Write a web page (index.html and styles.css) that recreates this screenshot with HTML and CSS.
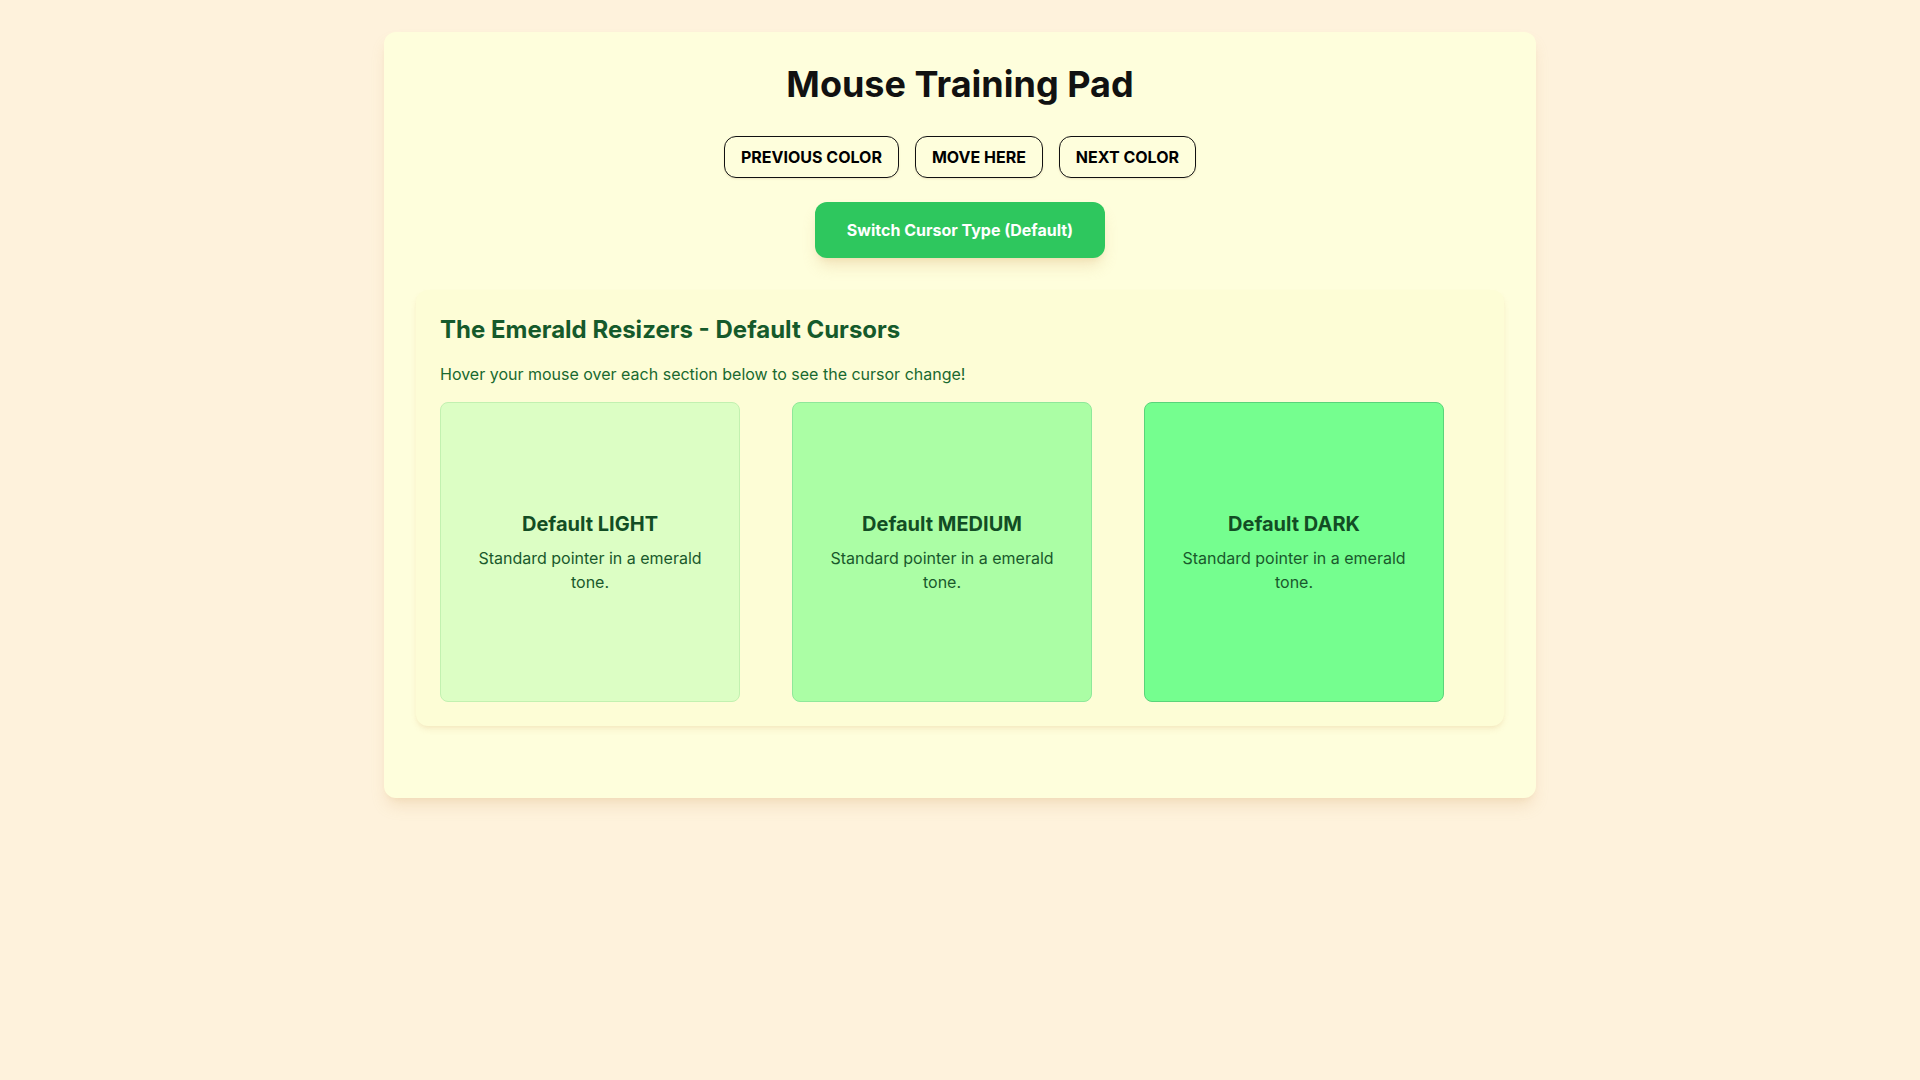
FILE: index.html
```html
<!DOCTYPE html>
<html lang="en">
<head>
<meta charset="utf-8">
<title>Mouse Training Pad</title>
<link rel="stylesheet" href="styles.css">
</head>
<body>
<main class="card">
  <h1 class="title">Mouse Training Pad</h1>
  <div class="nav">
    <button class="nav-btn">PREVIOUS COLOR</button>
    <button class="nav-btn">MOVE HERE</button>
    <button class="nav-btn">NEXT COLOR</button>
  </div>
  <div class="switch-row">
    <button class="switch-btn">Switch Cursor Type (Default)</button>
  </div>
  <section class="panel">
    <h2 class="panel-title">The Emerald Resizers - Default Cursors</h2>
    <p class="panel-text">Hover your mouse over each section below to see the cursor change!</p>
    <div class="boxes">
      <div class="box box-light">
        <h3 class="box-title">Default LIGHT</h3>
        <p class="box-text">Standard pointer in a emerald tone.</p>
      </div>
      <div class="box box-medium">
        <h3 class="box-title">Default MEDIUM</h3>
        <p class="box-text">Standard pointer in a emerald tone.</p>
      </div>
      <div class="box box-dark">
        <h3 class="box-title">Default DARK</h3>
        <p class="box-text">Standard pointer in a emerald tone.</p>
      </div>
    </div>
  </section>
</main>
</body>
</html>
```

FILE: styles.css
```css
* { box-sizing: border-box; }

html, body {
  margin: 0;
  padding: 0;
}

body {
  background: #fef2dc;
  font-family: Inter, "Noto Sans", "Liberation Sans", sans-serif;
  color: #111;
  min-height: 1080px;
  padding-top: 32px;
}

.card {
  width: 1152px;
  margin: 0 auto;
  background: #fefedc;
  border-radius: 12px;
  padding: 32px;
  box-shadow: 0 10px 15px -3px rgba(214, 170, 110, 0.25), 0 4px 6px -4px rgba(214, 170, 110, 0.2);
}

.title {
  margin: 0 0 32px;
  text-align: center;
  font-size: 36px;
  line-height: 40px;
  font-weight: 700;
  color: #111;
}

.nav {
  display: flex;
  justify-content: center;
  gap: 16px;
  margin-bottom: 24px;
}

.nav-btn {
  font-family: inherit;
  font-size: 16px;
  line-height: 24px;
  font-weight: 700;
  color: #000;
  background: transparent;
  border: 1px solid #111;
  border-radius: 12px;
  padding: 8px 16px;
  box-shadow: 0 1px 2px rgba(180, 140, 90, 0.2);
}

.switch-row {
  display: flex;
  justify-content: center;
  margin-bottom: 32px;
}

.switch-btn {
  font-family: inherit;
  font-size: 16px;
  line-height: 24px;
  font-weight: 700;
  color: #fff;
  background: #2ec75e;
  border: none;
  border-radius: 12px;
  padding: 16px 32px;
  box-shadow: 0 10px 15px -3px rgba(214, 170, 110, 0.3), 0 4px 6px -4px rgba(214, 170, 110, 0.25);
}

.panel {
  background: #fdfdd6;
  border-radius: 12px;
  padding: 24px;
  margin-bottom: 40px;
  box-shadow: 0 4px 6px -1px rgba(214, 170, 110, 0.2), 0 2px 4px -2px rgba(214, 170, 110, 0.15);
}

.panel-title {
  margin: 0 0 16px;
  font-size: 24px;
  line-height: 32px;
  font-weight: 700;
  color: #155a2b;
}

.panel-text {
  margin: 0 0 16px;
  font-size: 16px;
  line-height: 24px;
  color: #19692f;
}

.boxes {
  display: flex;
  flex-wrap: wrap;
  gap: 52px;
}

.box {
  width: 300px;
  height: 300px;
  border-radius: 8px;
  border: 1px solid;
  padding: 24px;
  display: flex;
  flex-direction: column;
  justify-content: center;
  align-items: center;
  text-align: center;
}

.box-light { background: #dcfec4; border-color: #c2f1b0; }
.box-medium { background: #abfea5; border-color: #8fe89a; }
.box-dark { background: #75fe8f; border-color: #5ad47a; }

.box-title {
  margin: 0 0 8px;
  font-size: 20px;
  line-height: 28px;
  font-weight: 700;
  color: #124d24;
}

.box-text {
  margin: 0;
  font-size: 16px;
  line-height: 24px;
  color: #19592c;
}
```
